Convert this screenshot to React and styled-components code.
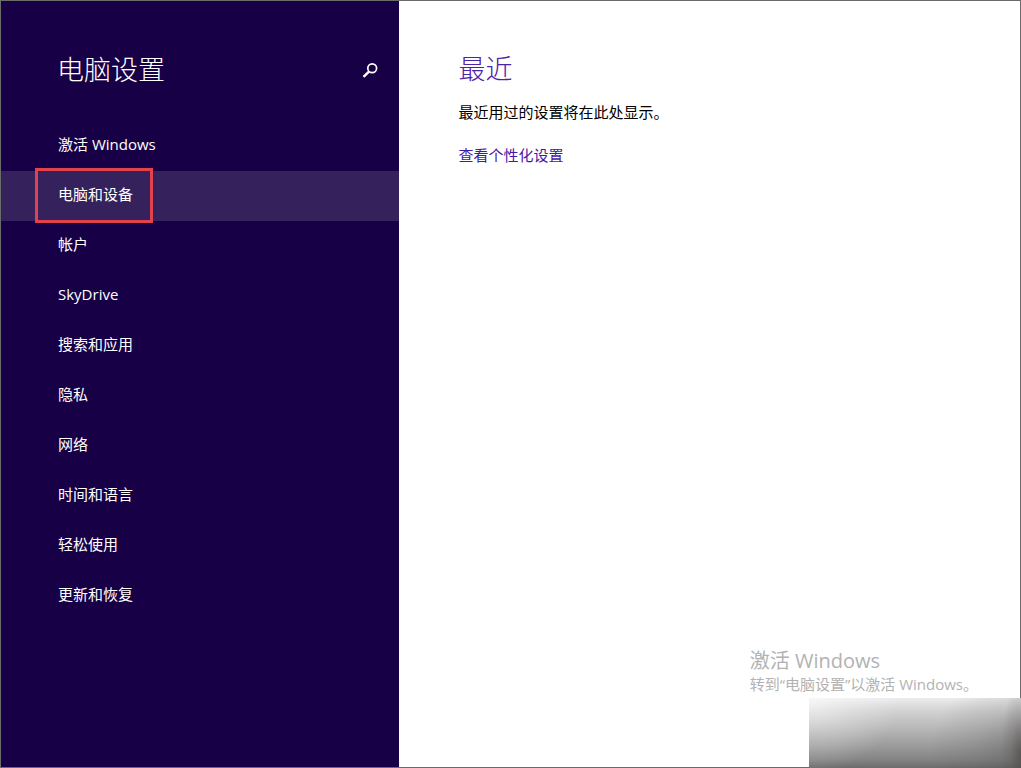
import React from "react";
import styled, { createGlobalStyle } from "styled-components";

const GlobalStyle = createGlobalStyle`
  *, *::before, *::after { box-sizing: border-box; }
  body {
    margin: 0;
    background: #fff;
    color: #000;
    font-family: "Open Sans", "Noto Sans CJK SC", sans-serif;
    font-size: 15px;
    line-height: 20px;
  }
`;

const Screen = styled.div`
  position: relative;
  display: flex;
  min-height: 100vh;
  border: 1px solid #6b6b6b;
`;

const Sidebar = styled.aside`
  flex: 0 0 39.1%;
  background: #180046;
  color: #fff;
`;

const SidebarHeader = styled.header`
  display: flex;
  align-items: center;
  justify-content: space-between;
  height: 120px;
  padding: 18px 21px 0 56px;
`;

const Title = styled.h1`
  margin: 0;
  font-size: 27px;
  line-height: 36px;
  font-weight: 300;
  color: ${({ $accent }) => ($accent ? "#4f22a8" : "#fff")};
`;

const SearchButton = styled.button`
  display: flex;
  padding: 0;
  border: 0;
  background: none;
  color: #fff;
  cursor: pointer;
`;

const Menu = styled.ul`
  margin: 0;
  padding: 0;
  list-style: none;
`;

const MenuLink = styled.a`
  position: relative;
  display: flex;
  align-items: center;
  height: 50px;
  padding: 0 57px 4px;
  color: #fff;
  text-decoration: none;
  background: ${({ $active }) => ($active ? "#35215c" : "transparent")};
`;

const Highlight = styled.span`
  position: absolute;
  top: -3px;
  bottom: -2px;
  left: 34px;
  width: 118px;
  border: 3px solid #e2414e;
  z-index: 1;
  pointer-events: none;
`;

const Content = styled.main`
  flex: 1;
  padding: 50px 59px;
`;

const Message = styled.p`
  margin: 15px 0 23px;
`;

const ContentLink = styled.a`
  color: #4617a5;
  text-decoration: none;
`;

const Watermark = styled.div`
  position: absolute;
  right: 42px;
  bottom: 73px;
  color: #b2b2b2;
  line-height: 20px;
`;

const WatermarkTitle = styled.div`
  font-size: 20px;
  line-height: 27px;
`;

const CornerPatch = styled.div`
  position: absolute;
  right: -1px;
  bottom: -1px;
  width: 212px;
  height: 70px;
  background:
    radial-gradient(20px 75px at 100% 80%, rgba(65, 58, 58, 0.5), rgba(80, 75, 75, 0.2) 50%, transparent),
    radial-gradient(90px 90px at 100% 80%, rgba(80, 78, 78, 0.4), rgba(80, 78, 78, 0.15) 50%, transparent),
    radial-gradient(90px 75px at 0 0, rgba(255, 255, 255, 0.6), rgba(255, 255, 255, 0.25) 50%, transparent),
    linear-gradient(to bottom, #ededed, #d4d4d4 12px, #b8b8b8 30px, #9b9b9b 48px, #838383 62px, #6c6c6c);
`;

const items = [
  "激活 Windows",
  "电脑和设备",
  "帐户",
  "SkyDrive",
  "搜索和应用",
  "隐私",
  "网络",
  "时间和语言",
  "轻松使用",
  "更新和恢复",
];
const activeItem = "电脑和设备";

function SearchIcon() {
  return (
    <svg width="16" height="16" viewBox="0 0 16 16" fill="none" stroke="currentColor" aria-hidden="true">
      <circle cx="10.2" cy="6.2" r="4.4" strokeWidth="1.7" />
      <path d="M7.2 9.4 L1.5 14.8" strokeWidth="2.5" />
    </svg>
  );
}

export default function App() {
  return (
    <>
      <GlobalStyle />
      <Screen lang="zh-CN">
        <Sidebar>
          <SidebarHeader>
            <Title>电脑设置</Title>
            <SearchButton type="button" aria-label="搜索">
              <SearchIcon />
            </SearchButton>
          </SidebarHeader>
          <nav>
            <Menu>
              {items.map((item) => (
                <li key={item}>
                  <MenuLink
                    href="#"
                    $active={item === activeItem}
                    aria-current={item === activeItem ? "page" : undefined}
                  >
                    {item}
                    {item === activeItem && <Highlight />}
                  </MenuLink>
                </li>
              ))}
            </Menu>
          </nav>
        </Sidebar>
        <Content>
          <Title as="h2" $accent>最近</Title>
          <Message>最近用过的设置将在此处显示。</Message>
          <ContentLink href="#">查看个性化设置</ContentLink>
        </Content>
        <Watermark>
          <WatermarkTitle>激活 Windows</WatermarkTitle>
          <div>转到“电脑设置”以激活 Windows。</div>
        </Watermark>
        <CornerPatch />
      </Screen>
    </>
  );
}
